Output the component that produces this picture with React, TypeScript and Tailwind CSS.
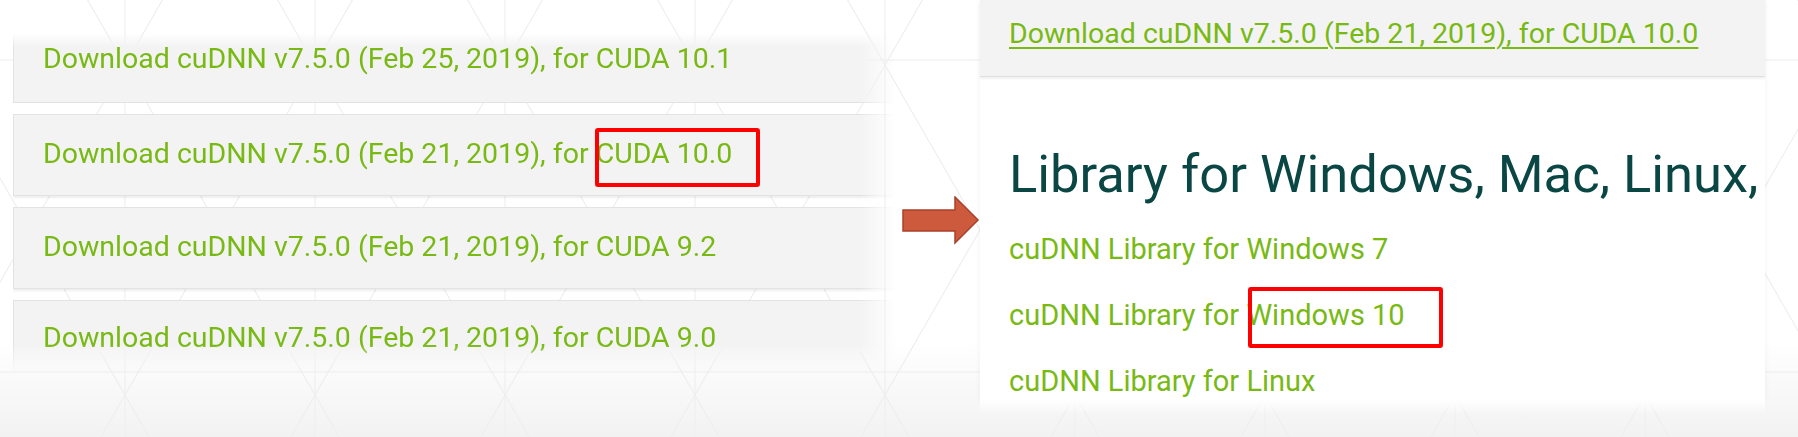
const cards = [
  { label: 'Download cuDNN v7.5.0 (Feb 25, 2019), for CUDA 10.1' },
  { label: 'Download cuDNN v7.5.0 (Feb 21, 2019), for CUDA 10.0' },
  { label: 'Download cuDNN v7.5.0 (Feb 21, 2019), for CUDA 9.2' },
  { label: 'Download cuDNN v7.5.0 (Feb 21, 2019), for CUDA 9.0' },
]

const libraries = ['cuDNN Library for Windows 7', 'cuDNN Library for Windows 10', 'cuDNN Library for Linux']

/** Faint triangle lattice that sits behind the whole screenshot. */
function Lattice() {
  return (
    <svg className="absolute inset-0 h-full w-full" viewBox="0 0 1798 437" preserveAspectRatio="none">
      <defs>
        <linearGradient id="floor" x1="0" y1="0" x2="0" y2="1">
          <stop offset="0" stopColor="#ffffff" />
          <stop offset="0.78" stopColor="#ffffff" />
          <stop offset="1" stopColor="#f2f2f2" />
        </linearGradient>
      </defs>
      <rect width="1798" height="437" fill="url(#floor)" />
      <g stroke="#eeeeee" strokeWidth="1.1" fill="none">
        <line x1="0" y1="60" x2="1798" y2="60" />
        <line x1="0" y1="372" x2="1798" y2="372" />
        {[-160, 30, 220, 410, 600, 790, 980, 1170, 1360, 1550, 1740, 1930].map((x) => (
          <g key={x}>
            <line x1={x + 95} y1="0" x2={x + 95} y2="437" />
            <line x1={x} y1="-100" x2={x + 190} y2="230" />
            <line x1={x + 190} y1="-100" x2={x} y2="230" />
            <line x1={x} y1="230" x2={x + 190} y2="560" />
            <line x1={x + 190} y1="230" x2={x} y2="560" />
          </g>
        ))}
      </g>
    </svg>
  )
}

function Arrow() {
  return (
    <svg width="78" height="50" viewBox="0 0 78 50">
      <path
        d="M1 14 H53 V1 L76 24 L53 47 V35 H1 Z"
        fill="#cd5a3c"
        stroke="#a9402a"
        strokeWidth="1.5"
        strokeLinejoin="miter"
      />
    </svg>
  )
}

function Card({ label, index }: { label: string; index: number }) {
  const first = index === 0
  const last = index === cards.length - 1
  return (
    <div
      className={
        'border border-[#e3e3e3] bg-[#f3f3f3] pl-[29px] shadow-[0_2px_2px_rgba(0,0,0,0.07)] ' +
        (first
          ? 'h-[70px] pt-[11px] [mask-image:linear-gradient(to_bottom,transparent,black_14px)]'
          : last
            ? 'h-[72px] pt-[23px] [mask-image:linear-gradient(to_bottom,black_62%,transparent)]'
            : 'h-[82px] pt-[25px]')
      }
    >
      <a className="block whitespace-nowrap text-[28.5px] leading-none text-[#78b914]">{label}</a>
    </div>
  )
}

export default function App() {
  return (
    <div className="relative h-[437px] w-[1798px] overflow-hidden bg-white font-['Roboto',sans-serif]">
      <Lattice />

      <div className="relative flex">
        {/* left: the list of versions, faded at its right edge */}
        <div className="flex w-[980px] pl-[13px]">
          <div className="flex w-[882px] flex-col gap-[11px] pt-[33px] [mask-image:linear-gradient(to_right,black_96%,transparent)]">
            {cards.map((c, i) => (
              <Card key={c.label} label={c.label} index={i} />
            ))}
          </div>
          <div className="pl-[7px] pt-[196px]">
            <Arrow />
          </div>
        </div>

        {/* right: the page that opens after the click */}
        <div className="w-[785px]">
          <div className="h-[400px] bg-white shadow-[0_0_6px_rgba(0,0,0,0.06)]">
            <div className="h-[77px] border-b border-[#e0e0e0] bg-[#f3f3f3] pl-[29px] pt-[20px] shadow-[0_2px_2px_rgba(0,0,0,0.06)]">
              <a className="block whitespace-nowrap text-[28.5px] leading-none text-[#78b914] underline decoration-2 underline-offset-[4px]">
                Download cuDNN v7.5.0 (Feb 21, 2019), for CUDA 10.0
              </a>
            </div>
            <div className="pl-[29px]">
              <h1 className="mt-[71px] whitespace-nowrap text-[52.5px] font-normal leading-none text-[#0a4744]">
                Library for Windows, Mac, Linux,
              </h1>
              <ul className="mt-[15px]">
                {libraries.map((l) => (
                  <li key={l} className="whitespace-nowrap text-[29px] leading-[66px] text-[#78b914]">
                    {l}
                  </li>
                ))}
              </ul>
            </div>
          </div>
          <div className="h-[14px] bg-gradient-to-b from-white to-transparent" />
        </div>
      </div>

      {/* the two red call-outs */}
      <div className="absolute left-[595px] top-[128px] h-[59px] w-[165px] rounded-[3px] border-[4px] border-[#ff0000]" />
      <div className="absolute left-[1248px] top-[287px] h-[61px] w-[195px] rounded-[3px] border-[4px] border-[#ff0000]" />
    </div>
  )
}
